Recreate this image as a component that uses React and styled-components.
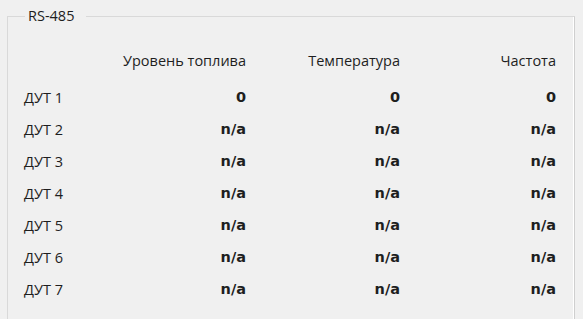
import React from 'react';
import styled, { createGlobalStyle } from 'styled-components';

const GlobalStyle = createGlobalStyle`
  html, body {
    margin: 0;
    padding: 0;
    background: #f0f0f0;
  }
  body {
    font-family: "Open Sans", "Noto Sans", sans-serif;
    color: #1e1e1e;
  }
`;

const Page = styled.div`
  width: 583px;
  height: 319px;
  overflow: hidden;
  padding: 7px 0 0 7px;
  box-sizing: border-box;
`;

const Group = styled.fieldset`
  width: 568px;
  height: 340px;
  box-sizing: border-box;
  margin: 0;
  padding: 15px 17px 0 16px;
  border: 1px solid #d9d9d9;
  border-right-color: #cfcfcf;
  box-shadow: inset -1px 0 0 #fff;
`;

const Legend = styled.legend`
  margin-left: 1px;
  padding: 0 12px 0 3px;
  font-size: 14.5px;
  line-height: 18px;
`;

const Table = styled.div`
  display: grid;
  grid-template-columns: 98px 124px 154px 156px;
  grid-template-rows: 41px;
  grid-auto-rows: 32px;
  align-items: center;
`;

const Head = styled.div`
  font-size: 14.5px;
  text-align: ${p => (p.$left ? 'left' : 'right')};
  white-space: nowrap;
`;

const Label = styled.div`
  font-size: 14.5px;
  white-space: nowrap;
`;

const Value = styled.div`
  font-family: "DejaVu Sans", Verdana, sans-serif;
  font-weight: bold;
  font-size: 14.5px;
  text-align: right;
`;

const rows = [
  ['0', '0', '0'],
  ['n/a', 'n/a', 'n/a'],
  ['n/a', 'n/a', 'n/a'],
  ['n/a', 'n/a', 'n/a'],
  ['n/a', 'n/a', 'n/a'],
  ['n/a', 'n/a', 'n/a'],
  ['n/a', 'n/a', 'n/a'],
];

export default function App() {
  return (
    <Page>
      <GlobalStyle />
      <Group>
        <Legend>RS-485</Legend>
        <Table>
          <Head $left />
          <Head>Уровень топлива</Head>
          <Head>Температура</Head>
          <Head>Частота</Head>
          {rows.map((r, i) => (
            <React.Fragment key={i}>
              <Label>ДУТ {i + 1}</Label>
              {r.map((v, j) => (
                <Value key={j}>{v}</Value>
              ))}
            </React.Fragment>
          ))}
        </Table>
      </Group>
    </Page>
  );
}
